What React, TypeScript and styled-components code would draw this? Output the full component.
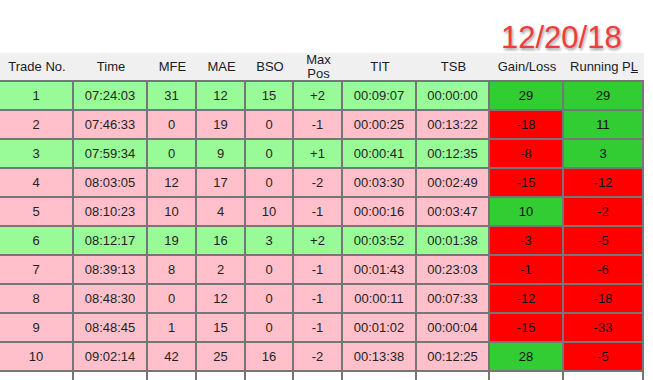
import React from "react";
import styled, { createGlobalStyle } from "styled-components";

const GlobalStyle = createGlobalStyle`
  html, body {
    margin: 0;
    padding: 0;
    background: #fff;
  }
  body {
    font-family: "Liberation Sans", Arial, sans-serif;
  }
`;

const COLS = "74px 74px 49px 49px 48px 49px 74px 73px 74px 80px";

const Page = styled.div`
  width: 653px;
  height: 380px;
  overflow: hidden;
  background: #fff;
`;

const DateBand = styled.div`
  height: 53px;
  box-sizing: border-box;
  padding: 22px 0 0 501px;
`;

const DateText = styled.div`
  font-family: "Liberation Sans", Arial, sans-serif;
  font-size: 31px;
  line-height: 31px;
  color: #f23c3c;
  text-shadow: 1px 2px 3px rgba(0, 0, 0, 0.4);
`;

const Grid = styled.div`
  width: 644px;
  color: #1e1e1e;
  font-size: 13px;
`;

const HeaderRow = styled.div`
  display: grid;
  grid-template-columns: ${COLS};
  height: 29px;
  box-sizing: border-box;
  background: #f0f0f0;
  border-bottom: 2px solid #767676;
`;

const HeadCell = styled.div`
  display: flex;
  align-items: center;
  justify-content: center;
  text-align: center;
  line-height: 14px;
  color: #1a1a2a;
`;

const Row = styled.div`
  display: grid;
  grid-template-columns: ${COLS};
  height: 29px;
`;

type Tone = "win" | "loss" | "good" | "bad" | "empty";

const toneBg: Record<Tone, string> = {
  win: "#98fb98",
  loss: "#ffc0cb",
  good: "#32cd32",
  bad: "#ff0000",
  empty: "#ffffff"
};

const Cell = styled.div<{ $tone: Tone }>`
  display: flex;
  align-items: center;
  justify-content: center;
  box-sizing: border-box;
  background: ${p => toneBg[p.$tone]};
  border-right: 2px solid #767676;
  border-bottom: 2px solid #767676;
  color: ${p => (p.$tone === "good" || p.$tone === "bad" ? "#111" : "#241f22")};
`;

const Accel = styled.span`
  text-decoration: underline;
`;

type Trade = [number, string, number, number, number, string, string, string, number, number];

const trades: Trade[] = [
  [1, "07:24:03", 31, 12, 15, "+2", "00:09:07", "00:00:00", 29, 29],
  [2, "07:46:33", 0, 19, 0, "-1", "00:00:25", "00:13:22", -18, 11],
  [3, "07:59:34", 0, 9, 0, "+1", "00:00:41", "00:12:35", -8, 3],
  [4, "08:03:05", 12, 17, 0, "-2", "00:03:30", "00:02:49", -15, -12],
  [5, "08:10:23", 10, 4, 10, "-1", "00:00:16", "00:03:47", 10, -2],
  [6, "08:12:17", 19, 16, 3, "+2", "00:03:52", "00:01:38", -3, -5],
  [7, "08:39:13", 8, 2, 0, "-1", "00:01:43", "00:23:03", -1, -6],
  [8, "08:48:30", 0, 12, 0, "-1", "00:00:11", "00:07:33", -12, -18],
  [9, "08:48:45", 1, 15, 0, "-1", "00:01:02", "00:00:04", -15, -33],
  [10, "09:02:14", 42, 25, 16, "-2", "00:13:38", "00:12:25", 28, -5]
];

const headers: React.ReactNode[] = [
  "Trade No.",
  "Time",
  "MFE",
  "MAE",
  "BSO",
  <>
    Max
    <br />
    Pos
  </>,
  "TIT",
  "TSB",
  "Gain/Loss",
  <>
    Running P<Accel>L</Accel>
  </>
];

function App(): JSX.Element {
  return (
    <Page>
      <GlobalStyle />
      <DateBand>
        <DateText>12/20/18</DateText>
      </DateBand>
      <Grid>
        <HeaderRow>
          {headers.map((h, i) => (
            <HeadCell key={i}>{h}</HeadCell>
          ))}
        </HeaderRow>
        {trades.map(t => {
          const rowTone: Tone = t[5].startsWith("+") ? "win" : "loss";
          const gain = t[8];
          const running = t[9];
          return (
            <Row key={t[0]}>
              {t.slice(0, 8).map((v, i) => (
                <Cell key={i} $tone={rowTone}>
                  {v}
                </Cell>
              ))}
              <Cell $tone={gain > 0 ? "good" : "bad"}>{gain}</Cell>
              <Cell $tone={running > 0 ? "good" : "bad"}>{running}</Cell>
            </Row>
          );
        })}
        <Row>
          {Array.from({ length: 10 }).map((_, i) => (
            <Cell key={i} $tone="empty" />
          ))}
        </Row>
      </Grid>
    </Page>
  );
}

export default App;
